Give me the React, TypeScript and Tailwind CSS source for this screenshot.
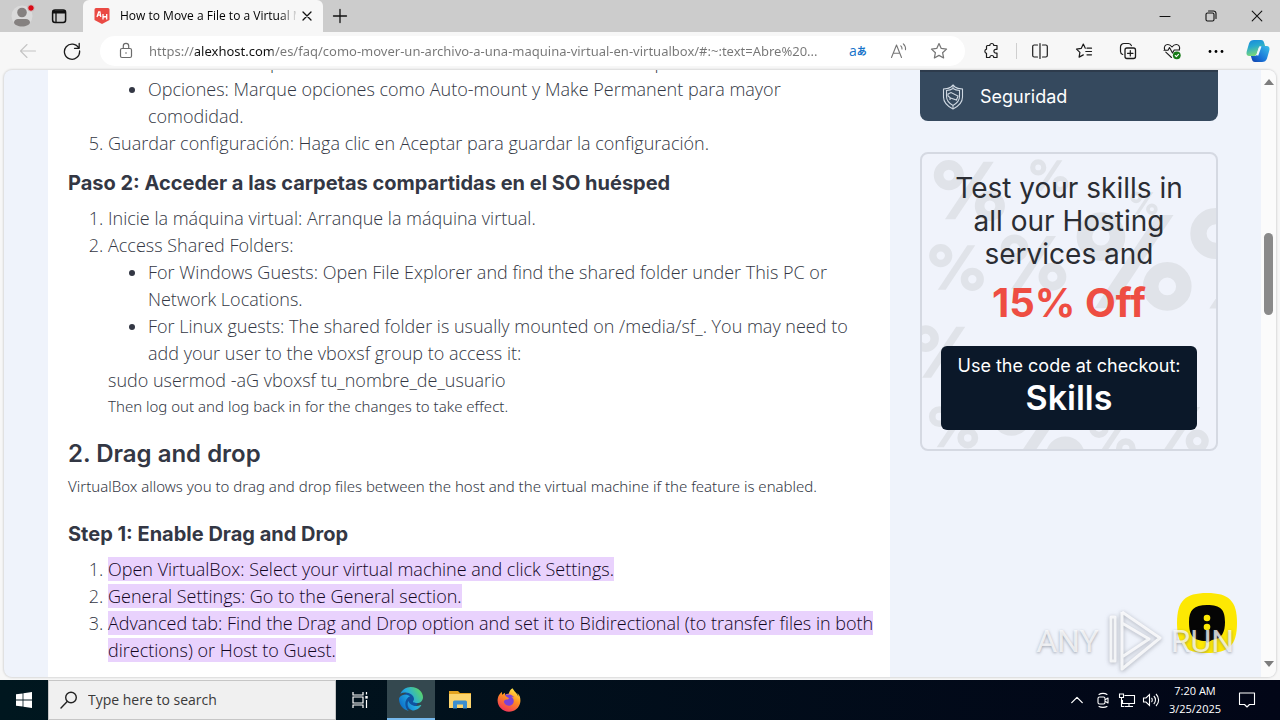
import type { ReactNode } from "react";
import { FaEdge, FaFirefoxBrowser } from "react-icons/fa6";

const PAGE_URL =
  "https://alexhost.com/es/faq/como-mover-un-archivo-a-una-maquina-virtual-en-virtualbox/#:~:text=Abre%20...";

type IconProps = { children: ReactNode; className?: string; box?: number };

function Line({ children, className = "size-4", box = 16 }: IconProps) {
  return (
    <svg
      viewBox={`0 0 ${box} ${box}`}
      className={className}
      fill="none"
      stroke="currentColor"
      strokeWidth="1.1"
      strokeLinecap="round"
      strokeLinejoin="round"
      aria-hidden="true"
    >
      {children}
    </svg>
  );
}

const STAR = "M8 1.4l2 4.3 4.7.6-3.5 3.2.9 4.7L8 11.9l-4.1 2.3.9-4.7L1.3 6.3 6 5.7z";

function TabStrip() {
  return (
    <header className="flex h-8 shrink-0 items-stretch bg-[#cccccc] text-[#111111]">
      <div className="flex w-[83px] items-center gap-6 rounded-br-md pl-[11px]">
        <button aria-label="Profile" className="h-8 w-6">
          <svg viewBox="0 0 24 32" className="h-8 w-6" aria-hidden="true">
            <circle cx="11" cy="16" r="10.5" fill="#dadada" />
            <circle cx="11" cy="12.5" r="4.8" fill="#858180" />
            <path d="M3 22.5c0-2 2-3.5 4-3.5h8c2 0 4 1.500 4 3.500 0 2-4 4-8 4s-8-2-8-4z" fill="#858180" />
            <circle cx="20" cy="8" r="3.300" fill="#d90b16" stroke="#cccccc" strokeWidth="1" />
          </svg>
        </button>
        <button aria-label="Tab actions">
          <svg viewBox="0 0 16 16" className="-ml-2 size-4" aria-hidden="true">
            <rect x="1.600" y="2" width="13" height="12.500" rx="2.500" fill="none" stroke="#111" strokeWidth="1.500" />
            <path d="M1.500 2.500h13v3h-13z" fill="#111" />
            <path d="M5 5v9" stroke="#111" strokeWidth="1.300" />
          </svg>
        </button>
      </div>
      <div className="flex w-60 items-center rounded-t-md bg-[#f7f7f7] pl-[11px] pr-2">
        <svg viewBox="0 0 16 16" className="size-4 shrink-0" aria-hidden="true">
          <path d="M2 0h12a1.500 1.500 0 0 1 1.500 1.500v10.500L8 16 .5 12V1.500A1.500 1.500 0 0 1 2 0z" fill="#ea4a44" />
          <path d="M3 9l1.700-5h1.200l.9 5M4 7.200h3M9 6v5.500M12.700 6v5.500M9 9l3.500-.5" stroke="#fff" strokeWidth="1.300" fill="none" />
        </svg>
        <span className="ml-2.5 w-[176px] overflow-hidden whitespace-nowrap text-[12px] leading-4 text-black [mask-image:linear-gradient(90deg,#000_160px,transparent_178px)]">
          How to Move a File to a Virtual M
        </span>
        <button aria-label="Close tab" className="ml-auto">
          <Line className="size-4">
            <path d="M4 4l8 8M12 4l-8 8" strokeWidth="1.300" />
          </Line>
        </button>
      </div>
      <button aria-label="New tab" className="ml-[9px]">
        <Line className="size-4">
          <path d="M8 1.500v13M1.500 8h13" strokeWidth="1.300" />
        </Line>
      </button>
      <div className="ml-auto flex items-center">
        <button aria-label="Minimize" className="flex w-[46px] justify-center">
          <Line>
            <path d="M3 8.500h10" />
          </Line>
        </button>
        <button aria-label="Restore" className="flex w-[46px] justify-center">
          <Line>
            <rect x="3" y="5" width="8" height="8" rx="1.500" />
            <path d="M5.500 3h5a2.500 2.500 0 0 1 2.500 2.500v5" />
          </Line>
        </button>
        <button aria-label="Close" className="flex w-[46px] justify-center">
          <Line>
            <path d="M3.200 3.200l9.600 9.600M12.800 3.200l-9.600 9.600" />
          </Line>
        </button>
      </div>
    </header>
  );
}

function Toolbar() {
  return (
    <nav aria-label="Browser toolbar" className="flex h-[38px] shrink-0 items-center text-[#1b1b1b]">
      <button aria-label="Back" className="ml-[19px] text-[#c4c4c4]">
        <Line className="size-[18px]" box={18}>
          <path d="M16.500 9h-15M8 2.500L1.500 9 8 15.500" />
        </Line>
      </button>
      <button aria-label="Refresh" className="ml-[26px]">
        <Line className="size-[18px]" box={18}>
          <path d="M15.800 6.200A7.600 7.600 0 1 0 16.600 9M16.200 1.500v4.800h-4.700" strokeWidth="1.300" />
        </Line>
      </button>
      <div className="ml-[19px] flex h-[30px] min-w-0 flex-1 items-center rounded-full bg-white pl-[18px] pr-[17px]">
        <svg viewBox="0 0 16 18" className="h-[18px] w-4 shrink-0" fill="none" stroke="#6b6b6b" strokeWidth="1.200" aria-hidden="true">
          <rect x="2.500" y="6.500" width="11" height="9" rx="1.500" />
          <path d="M5.300 6.300V4a2.700 2.700 0 0 1 5.400 0v2.300" />
          <circle cx="8" cy="11" r=".8" fill="#6b6b6b" stroke="none" />
        </svg>
        <input
          aria-label="Address"
          defaultValue={PAGE_URL}
          className="ml-[15px] min-w-0 flex-1 bg-[linear-gradient(90deg,#767676_46px,#111111_46px,#111111_124px,#767676_124px)] bg-clip-text font-['Noto_Sans',sans-serif] text-[13px] leading-5 text-transparent outline-none"
        />
        <button aria-label="Translate" className="ml-3 flex w-6 items-center text-[#1673c9]">
          <span className="font-['Open_Sans',sans-serif] text-[14px] leading-4">a</span>
          <span className="font-['Noto_Sans_CJK_JP',sans-serif] text-[10px] font-bold leading-4">あ</span>
        </button>
        <button aria-label="Read aloud" className="ml-[17px] text-[#767676]">
          <Line className="size-[18px]" box={18}>
            <path d="M1.500 15.500L6.500 3l5 12.500M3.200 11.200h6.600M10.800 3.800c1 .9 1.300 2 1.200 3.200M13.300 1.800c1.800 1.600 2.500 3.700 2.200 6" />
          </Line>
        </button>
        <button aria-label="Add to favorites" className="ml-[22px] text-[#767676]">
          <Line className="size-[18px]">
            <path d={STAR} />
          </Line>
        </button>
      </div>
      <button aria-label="Extensions" className="ml-[18px]">
        <Line className="size-[18px]" box={18}>
          <path d="M4.500 3.500h2.300a2 2 0 0 1 4 0H14v3.800h-1.200a1.900 1.900 0 0 0 0 3.800H14v4.400h-3.200a2 2 0 0 0-4 0H3.500v-4.200a2.100 2.100 0 0 1 0-4.100V4.500a1 1 0 0 1 1-1z" strokeWidth="1.200" />
        </Line>
      </button>
      <span className="ml-[15px] h-4 w-px bg-[#cfcfcf]" />
      <button aria-label="Split screen" className="ml-3.5">
        <Line className="size-[18px]" box={18}>
          <path d="M6.500 3H3.200a1.500 1.500 0 0 0-1.500 1.500v9A1.500 1.500 0 0 0 3.200 15h3.300M11.500 3h3.300a1.500 1.500 0 0 1 1.500 1.500v9a1.500 1.500 0 0 1-1.500 1.500h-3.300M9 1.500v15" strokeWidth="1.200" />
        </Line>
      </button>
      <button aria-label="Favorites" className="ml-[26px]">
        <Line className="size-[18px]" box={18}>
          <path d="M10.300 6.200L8.300 2 6.200 6.400l-4.700.7 3.400 3.300-.8 4.700 4.200-2.200M12 6.200h4.500M10.800 9.500h5.700M12 12.800h4.500" strokeWidth="1.200" />
        </Line>
      </button>
      <button aria-label="Collections" className="ml-[26px]">
        <Line className="size-[18px]" box={18}>
          <rect x="6" y="6" width="10.500" height="10.500" rx="2" strokeWidth="1.300" />
          <path d="M11.300 8.500v5.500M8.500 11.300H14M3.700 12.500A3 3 0 0 1 1.500 9.600V5a3.500 3.500 0 0 1 3.500-3.500h4.500a3 3 0 0 1 2.900 2.200" strokeWidth="1.200" />
        </Line>
      </button>
      <button aria-label="Browser essentials" className="ml-[26px]">
        <Line className="size-[18px]" box={18}>
          <path d="M1.800 8C.5 4.800 2.300 2.500 4.800 2.500 6.800 2.500 8 3.700 9 5c1-1.300 2.200-2.500 4.200-2.500 2.500 0 4.300 2.300 3 5.500M2.800 10.200L8.500 15.500M1 8.300h4l1.500-2.800 3 5.500L11.200 8h5.300" />
          <circle cx="13.800" cy="13.300" r="3.900" fill="#177b17" stroke="none" />
          <path d="M12.200 13.500l1.200 1.100 2.100-2.300" stroke="#fff" />
        </Line>
      </button>
      <button aria-label="Settings and more" className="ml-[26px]">
        <svg viewBox="0 0 18 18" className="size-[18px]" aria-hidden="true">
          <circle cx="3" cy="9.500" r="1.400" />
          <circle cx="9" cy="9.500" r="1.400" />
          <circle cx="15" cy="9.500" r="1.400" />
        </svg>
      </button>
      <button aria-label="Copilot" className="ml-[21px] mr-[10px]">
        <svg viewBox="0 0 24 24" className="size-6" aria-hidden="true">
          <defs>
            <linearGradient id="cp1" x1="0" y1="0" x2="0.300" y2="1">
              <stop offset="0" stopColor="#1787dd" />
              <stop offset=".45" stopColor="#27a8cf" />
              <stop offset="1" stopColor="#7ad878" />
            </linearGradient>
            <linearGradient id="cp2" x1="1" y1="0" x2="0" y2="1">
              <stop offset="0" stopColor="#3ac1e8" />
              <stop offset=".6" stopColor="#1873d8" />
              <stop offset="1" stopColor="#0f3ba6" />
            </linearGradient>
          </defs>
          <path d="M8 1h7c2 0 2.600 1 3.200 3l.9 3h-3.600c-2 0-2.700 1-3.300 3l-1.600 5c-.5 1.500-1.500 2-3 2H3.500C.8 17 0 15 .7 12.500L3 4.500C3.800 2 5.500 1 8 1z" fill="url(#cp1)" />
          <path d="M16 23H9c-2 0-2.600-1-3.200-3l-.9-3h3.600c2 0 2.700-1 3.300-3l1.600-5c.5-1.500 1.500-2 3-2h4.100c2.700 0 3.500 2 2.800 4.500L21 19.500c-.8 2.500-2.500 3.500-5 3.500z" fill="url(#cp2)" />
          <path d="M10.500 16l3-8.500h2l-3.300 9.300z" fill="#f1f8ff" />
        </svg>
      </button>
    </nav>
  );
}

function Mark({ children }: { children: ReactNode }) {
  return <mark className="bg-[#e9d2fd] text-[#12061f]">{children}</mark>;
}

function Article() {
  return (
    <article className="ml-11 min-w-0 max-w-[842px] flex-1 bg-white pl-5 pr-3 text-[#333744]">
      <ol start={4} className="-mt-[21px] list-decimal pl-10 text-[18px] font-light leading-[27px]">
        <li className="list-none">
          <ul className="list-disc pl-10 pr-4">
            <li>Nombre de carpeta: Introduzca un nombre de un recurso compartido.</li>
            <li>Opciones: Marque opciones como Auto-mount y Make Permanent para mayor comodidad.</li>
          </ul>
        </li>
        <li>Guardar configuración: Haga clic en Aceptar para guardar la configuración.</li>
      </ol>
      <h3 className="mt-3.5 font-['Inter',sans-serif] text-[20px] font-bold leading-6">
        Paso 2: Acceder a las carpetas compartidas en el SO huésped
      </h3>
      <ol className="mt-2.5 list-decimal pl-10 text-[18px] font-light leading-[27px]">
        <li>Inicie la máquina virtual: Arranque la máquina virtual.</li>
        <li>
          Access Shared Folders:
          <ul className="list-disc pl-10 pr-4">
            <li>For Windows Guests: Open File Explorer and find the shared folder under This PC or Network Locations.</li>
            <li>
              For Linux guests: The shared folder is usually mounted on /media/sf_. You may need to add your user to the
              vboxsf group to access it:
            </li>
          </ul>
          <p>sudo usermod -aG vboxsf tu_nombre_de_usuario</p>
          <p className="font-['Noto_Sans',sans-serif] text-[15px] leading-6">
            Then log out and log back in for the changes to take effect.
          </p>
        </li>
      </ol>
      <h2 className="mt-5 font-['Inter',sans-serif] text-[24px] font-semibold leading-8">2. Drag and drop</h2>
      <p className="mt-1 font-['Noto_Sans',sans-serif] text-[15px] font-light leading-6">
        VirtualBox allows you to drag and drop files between the host and the virtual machine if the feature is enabled.
      </p>
      <h3 className="mt-6 font-['Inter',sans-serif] text-[20px] font-bold leading-6">Step 1: Enable Drag and Drop</h3>
      <ol className="mt-2.5 list-decimal pl-10 text-[18px] font-light leading-[27px]">
        <li>
          <Mark>Open VirtualBox: Select your virtual machine and click Settings.</Mark>
        </li>
        <li>
          <Mark>General Settings: Go to the General section.</Mark>
        </li>
        <li>
          <Mark>
            Advanced tab: Find the Drag and Drop option and set it to Bidirectional (to transfer files in both
            directions) or Host to Guest.
          </Mark>
        </li>
      </ol>
    </article>
  );
}

const PERCENTS = [
  { x: 48, y: 37, s: 1.3 },
  { x: 129, y: 22, s: 0.7 },
  { x: 225, y: 50, s: 0.5 },
  { x: 215, y: 109, s: 2.1 },
  { x: 113, y: 110, s: 1.2 },
  { x: 35, y: 115, s: 1 },
  { x: 333, y: 107, s: 2.2 },
  { x: 22, y: 201, s: 1.15 },
  { x: 32, y: 277, s: 0.9 },
  { x: 118, y: 286, s: 1.7 },
  { x: 193, y: 288, s: 0.85 },
  { x: 263, y: 279, s: 1 },
];

function PercentPattern() {
  return (
    <svg viewBox="0 0 298 299" className="absolute inset-0 size-full" aria-hidden="true">
      {PERCENTS.map((p) => (
        <g key={`${p.x}-${p.y}`} transform={`translate(${p.x} ${p.y}) scale(${p.s})`} fill="none" stroke="#e0e3e9" strokeWidth="7.5">
          <circle cx="-16" cy="-12" r="8" />
          <circle cx="16" cy="12" r="8" />
          <path d="M19 -22.500h-8L-19 22.500h8z" fill="#e0e3e9" stroke="none" />
        </g>
      ))}
    </svg>
  );
}

function Sidebar() {
  return (
    <aside className="ml-[30px] w-[298px] shrink-0 font-['Inter',sans-serif]">
      <a href="#seguridad" className="flex h-[51px] items-center rounded-b-lg border-t-2 border-[#2d3b4c] bg-[#35495e] pl-[21px] text-[18px] leading-6 text-white">
        <svg viewBox="0 0 24 26" className="h-[26px] w-6" fill="none" stroke="#cfd8e2" strokeWidth="1.100" aria-hidden="true">
          <path d="M12 1l2 2c2 1.500 4.500 1.800 7.500 2v8c0 5.500-4.500 9.500-9.500 12-5-2.500-9.500-6.500-9.500-12V5c3-.2 5.500-.5 7.500-2z" />
          <path d="M12 4.500c2 1.300 4 1.800 6.500 2v6c0 4-3 7-6.500 9-3.500-2-6.500-5-6.500-9v-6c2.500-.2 4.500-.7 6.500-2zM12 1v4M12 21v4M7 10l3-1.500 7 3.500-1.500 4-6-2-2.500-2zM9 13v3" />
        </svg>
        <span className="ml-[15px]">Seguridad</span>
      </a>
      <section className="relative mt-[31px] flex h-[299px] flex-col items-center overflow-hidden rounded-lg border-2 border-[#d5d9e2] bg-[#f0f3fb] px-[19px]">
        <PercentPattern />
        <p className="relative mt-[18px] whitespace-nowrap text-center text-[28px] leading-[33px] text-[#2b2d33]">
          Test your skills in
          <br />
          all our Hosting
          <br />
          services and
        </p>
        <p className="relative mt-[5px] text-[40px] font-bold leading-[54px] text-[#ee4d42]">15% Off</p>
        <div className="relative mt-4 flex h-[84px] w-full flex-col items-center rounded-md bg-[#0b1829] pt-2 text-white">
          <p className="whitespace-nowrap text-[18px] leading-6">Use the code at checkout:</p>
          <p className="text-[34px] font-semibold leading-10">Skills</p>
        </div>
      </section>
    </aside>
  );
}

function ScrollBar() {
  return (
    <div className="ml-auto flex w-[15px] shrink-0 flex-col items-center bg-[#fbfbfb]">
      <svg viewBox="0 0 10 6" className="mt-[9px] h-1.5 w-2.5" aria-hidden="true">
        <path d="M5 0l5 6H0z" fill="#7d7d7d" />
      </svg>
      <div className="mt-[148px] h-[82px] w-[9px] rounded-full bg-[#8a8a8a]" />
      <svg viewBox="0 0 10 6" className="mb-2.5 mt-auto h-1.5 w-2.5" aria-hidden="true">
        <path d="M0 0h10L5 6z" fill="#7d7d7d" />
      </svg>
    </div>
  );
}

function Floating() {
  return (
    <>
      <button aria-label="Chat" className="absolute bottom-6 right-[39px] size-[60px]">
        <svg viewBox="0 0 60 60" aria-hidden="true">
          <path d="M30 0C52 0 60 8 60 30S52 60 30 60 0 52 0 30 8 0 30 0z" fill="#fde803" />
          <path d="M30 12c14 0 18 5 18 17 0 10-3 17-13 18l-5 3-1-2c-13 0-17-6-17-19 0-12 5-17 18-17z" fill="#050505" />
          <circle cx="30" cy="25" r="3.300" fill="#fde803" />
          <circle cx="30" cy="34" r="3.300" fill="#fde803" />
        </svg>
      </button>
      <div
        aria-hidden="true"
        className="pointer-events-none absolute bottom-0.5 right-[42px] flex items-center gap-2 font-['Roboto',sans-serif] text-[32px] leading-[68px] text-white/75 [text-shadow:0_1px_3px_rgba(90,95,110,0.55)]"
      >
        <span>ANY</span>
        <svg viewBox="0 0 56 64" className="h-16 w-14 drop-shadow-[0_1px_2px_rgba(90,95,110,0.6)]" fill="none" stroke="#fff" strokeOpacity=".8" strokeWidth="3" strokeLinejoin="round">
          <path d="M15 3L53 29 15 60V48M15 3v37M15 14L42 30 15 48zM4 8v44M4 8h4v44H4z" />
        </svg>
        <span>RUN</span>
      </div>
    </>
  );
}

function TaskBar() {
  return (
    <footer className="flex h-10 shrink-0 items-stretch bg-linear-to-r from-[#00171f] to-[#020617] text-white">
      <button aria-label="Start" className="flex w-12 items-center justify-center">
        <svg viewBox="0 0 16 16" className="size-4" fill="#fff" aria-hidden="true">
          <path d="M0 2.300l6.600-.9v6.200H0zM7.400 1.300L16 0v7.600H7.400zM0 8.400h6.600v6.200L0 13.700zM7.400 8.400H16V16l-8.600-1.300z" />
        </svg>
      </button>
      <div className="flex w-72 items-center border border-[#c6c6c6] bg-[#f0f0f0] pl-[11px] text-[#222222]">
        <Line className="size-[18px]" box={18}>
          <circle cx="11" cy="6.500" r="5.300" strokeWidth="1.400" />
          <path d="M7.200 10.500L1 17" strokeWidth="1.400" />
        </Line>
        <input
          type="text"
          aria-label="Search"
          placeholder="Type here to search"
          className="ml-2.5 min-w-0 flex-1 bg-transparent text-[14px] leading-5 outline-none placeholder:text-[#3a3a3a]"
        />
      </div>
      <button aria-label="Task view" className="ml-[15px] flex w-[36px] items-center pl-0.5">
        <svg viewBox="0 0 16 16" className="ml-[-1px] size-4" fill="none" stroke="#fff" strokeWidth="1.200" aria-hidden="true">
          <path d="M1 0v3h10V0M1 16v-3h10v3M1 5h10v6H1zM14.500 0v2.500M14.500 8v8" />
          <path d="M13.300 4h2.400v2.600h-2.400z" fill="#fff" stroke="none" />
        </svg>
      </button>
      <button aria-label="Microsoft Edge" className="flex w-12 items-center justify-center border-b-2 border-[#76b9ed] bg-[#34484f]">
        <span className="relative flex size-6 items-center justify-center">
          <svg viewBox="0 0 24 24" className="absolute inset-0 size-6" aria-hidden="true">
            <defs>
              <linearGradient id="edge" x1="0" y1=".7" x2="1" y2=".1">
                <stop offset="0" stopColor="#0c6fc9" />
                <stop offset=".45" stopColor="#24a9e1" />
                <stop offset="1" stopColor="#63dc55" />
              </linearGradient>
            </defs>
            <circle cx="10.500" cy="14" r="8.500" fill="#10529f" />
          </svg>
          <FaEdge className="relative size-6" style={{ fill: "url(#edge)" }} />
        </span>
      </button>
      <button aria-label="File Explorer" className="flex w-12 items-center justify-center">
        <svg viewBox="0 0 24 20" className="ml-0.5 h-5 w-6" aria-hidden="true">
          <path d="M1 1h9l2 2h11v3H1z" fill="#e4a320" />
          <path d="M1 4h22v14H1z" fill="#fcd46d" />
          <path d="M5 18.500V12a1.500 1.500 0 0 1 1.500-1.500h11A1.500 1.500 0 0 1 19 12v6.500h-4v-4H9v4z" fill="#3d8fcf" />
        </svg>
      </button>
      <button aria-label="Firefox" className="flex w-[52px] items-center justify-center">
        <span className="relative flex size-6 items-center justify-center">
          <svg viewBox="0 0 24 24" className="absolute inset-0 size-6" aria-hidden="true">
            <defs>
              <linearGradient id="fox" x1=".8" y1="0" x2=".3" y2="1">
                <stop offset="0" stopColor="#fff04a" />
                <stop offset=".45" stopColor="#ff9020" />
                <stop offset="1" stopColor="#f0305c" />
              </linearGradient>
            </defs>
            <circle cx="12" cy="13" r="7.500" fill="#7b41d6" />
          </svg>
          <FaFirefoxBrowser className="relative size-6" style={{ fill: "url(#fox)" }} />
        </span>
      </button>
      <div className="ml-auto flex items-center">
        <button aria-label="Show hidden icons">
          <Line className="size-3.5">
            <path d="M2 11l6-6 6 6" strokeWidth="1.500" />
          </Line>
        </button>
        <button aria-label="Meet now" className="ml-[11px]">
          <Line className="size-4">
            <rect x="3" y="5" width="7" height="7" rx="1.500" />
            <path d="M10.500 7.500L13 6v5l-2.500-1.500M4 2.500c2-1.500 6-1.500 8 0M4 14.500c2 1.200 6 1.200 8 0" />
          </Line>
        </button>
        <button aria-label="Network" className="ml-[7px]">
          <svg viewBox="0 0 18 16" className="h-4 w-[18px]" fill="none" stroke="#fff" strokeWidth="1.100" aria-hidden="true">
            <path d="M6.500 3.500h10v8h-12V8M11 11.500V14M7 14.500h8M1.500 2h4v3.500h-4zM3.500 5.500v9h3" />
          </svg>
        </button>
        <button aria-label="Volume" className="ml-1.5">
          <svg viewBox="0 0 18 16" className="h-4 w-[18px]" fill="none" stroke="#fff" strokeWidth="1.100" aria-hidden="true">
            <path d="M1.500 6h2.500l3.500-3.500v11L4 10H1.500zM9.500 6c1 1 1 3 0 4M11.800 4c2.200 2.200 2.200 5.800 0 8M14 2c3.500 3.500 3.500 8.500 0 12" />
          </svg>
        </button>
        <time className="ml-2 flex w-[54px] flex-col items-center whitespace-nowrap text-[11px] leading-[18px]">
          <span>7:20 AM</span>
          <span>3/25/2025</span>
        </time>
        <button aria-label="Notifications" className="ml-4 mr-6">
          <Line className="size-[18px]" box={18}>
            <path d="M1.500 2h15v11.500h-5L9 16l-2.500-2.500h-5z" />
          </Line>
        </button>
      </div>
    </footer>
  );
}

export default function App() {
  return (
    <div className="flex h-screen flex-col overflow-hidden bg-[#f7f7f7] font-['Open_Sans',sans-serif]">
      <TabStrip />
      <Toolbar />
      <main className="relative mx-1 mb-[3px] flex min-h-0 flex-1 overflow-hidden rounded-lg bg-[#eff3fb] shadow-[0_0_2px_1px_rgba(0,0,0,0.12)]">
        <Article />
        <Sidebar />
        <ScrollBar />
        <Floating />
      </main>
      <TaskBar />
    </div>
  );
}
